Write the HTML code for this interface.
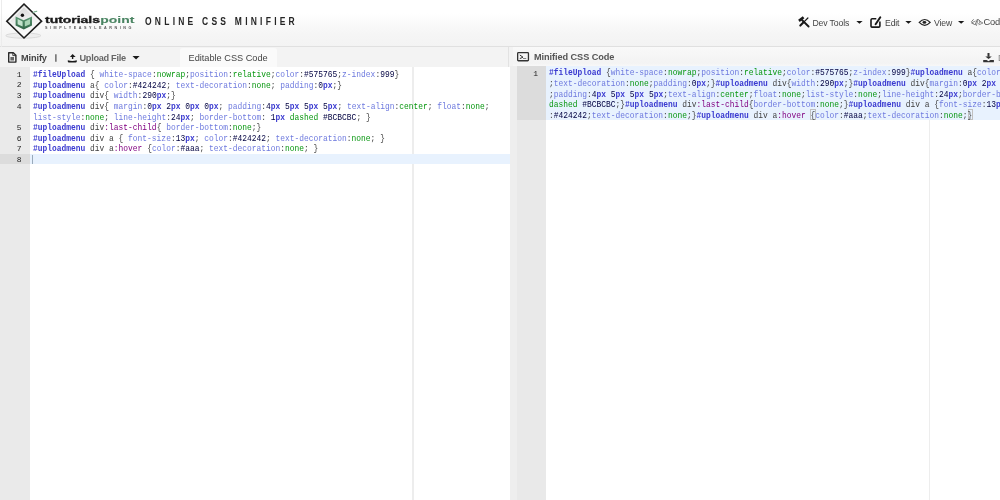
<!DOCTYPE html>
<html><head><meta charset="utf-8">
<style>
*{margin:0;padding:0;box-sizing:border-box}
html,body{width:1000px;height:500px;overflow:hidden;background:#fff;font-family:"Liberation Sans",sans-serif}
.abs{position:absolute}
svg{filter:blur(0.25px)}
#hdr{position:absolute;left:0;top:0;width:1000px;height:47px;background:linear-gradient(#ffffff 0%,#ffffff 28%,#f5f5f5 75%,#f3f3f3 100%);border-bottom:1px solid #e0e0e0}
#title{filter:blur(0.25px);position:absolute;left:145px;top:17.1px;font-size:10px;line-height:10px;font-weight:bold;letter-spacing:3.8px;color:#252525;white-space:nowrap;transform:scaleX(0.85);transform-origin:0 0}
.menu{filter:blur(0.25px);position:absolute;top:17.7px;font-size:8.7px;line-height:10px;letter-spacing:-0.15px;color:#444;white-space:nowrap}
#tb{position:absolute;left:0;top:47px;width:1000px;height:19.5px;background:#f3f3f3}
.tbt{filter:blur(0.25px);position:absolute;top:52.55px;font-size:9.2px;line-height:10px;color:#444;white-space:nowrap}
#tab{position:absolute;left:180px;top:48px;width:97px;height:19px;background:#fafafa;border-radius:3px 3px 0 0}
#ed{position:absolute;left:0;top:66.5px;width:1000px;height:434px;background:#fff}
.gut{position:absolute;top:66.3px;height:434px;background:#eaeaea}
.code{position:absolute;top:69.9px;font-family:"Liberation Mono",monospace;font-size:9.2px;line-height:10.667px;color:rgb(64,64,64);white-space:pre;transform:scaleX(0.8623);transform-origin:0 0;filter:blur(0.3px)}
.gnums{filter:blur(0.25px);position:absolute;top:68.5px;font-family:"Liberation Mono",monospace;font-size:8px;line-height:10.667px;color:#222;text-align:right}
.ln{height:10.667px}
.gn{height:10.667px}
i{font-style:normal}
.k{color:#3a3ad0;font-weight:bold}
.p{color:rgb(109,121,222)}
.c{color:rgb(6,150,14)}
.n{color:rgb(0,0,64)}
.s{color:rgb(128,0,128)}
</style></head><body>
<div id="hdr"></div>
<!-- logo -->
<svg class="abs" style="left:0;top:0" width="140" height="45" viewBox="0 0 140 45">
 <defs>
  <radialGradient id="sh" cx="50%" cy="50%" r="50%"><stop offset="0" stop-color="#c8c8c8"/><stop offset="0.7" stop-color="#dcdcdc"/><stop offset="1" stop-color="#f2f2f2" stop-opacity="0"/></radialGradient>
  <linearGradient id="dg" x1="0" y1="0" x2="0.3" y2="1"><stop offset="0" stop-color="#cfcfcf"/><stop offset="0.55" stop-color="#ececec"/><stop offset="1" stop-color="#fdfdfd"/></linearGradient>
  <linearGradient id="bk" x1="0" y1="0" x2="0" y2="1"><stop offset="0" stop-color="#5e9a76"/><stop offset="1" stop-color="#2f6446"/></linearGradient>
 </defs>
 <ellipse cx="23.3" cy="35.6" rx="17.6" ry="2.6" fill="#eeeeee" stroke="#dadada" stroke-width="1"/>
 <path d="M24 4 L41.6 21.2 L24 38 L6.8 21.2 Z" fill="url(#dg)" stroke="#1c1c1c" stroke-width="1.6" stroke-linejoin="miter"/>
 <path d="M24 6.6 L38.9 21.2 L24 35.4 L9.5 21.2 Z" fill="none" stroke="#fafafa" stroke-width="1"/>
 <path d="M15.6 16.4 L23.6 20.2 L32 16.4 L32 25.6 L23.8 29.6 L15.6 25.6 Z" fill="url(#bk)"/>
 <path d="M17.6 19 L22.6 21.6 L22.6 26.4 L17.6 24.2Z" fill="#c4e3cd"/>
 <path d="M24.8 21.6 L30 19 L30 24.2 L24.8 26.4Z" fill="#a9d4b6"/>
 <circle cx="22.4" cy="15.2" r="1.7" fill="#111"/>
 <path d="M32.8 13 Q34.5 11.2 37.2 11.4" stroke="#7fb394" stroke-width="1.1" fill="none"/>
 <text x="45" y="23.4" font-family="Liberation Sans" font-weight="bold" font-size="9.2" fill="#1a1a1a" stroke="#1a1a1a" stroke-width="0.35" textLength="55" lengthAdjust="spacingAndGlyphs">tutorials</text>
 <text x="100.3" y="23.4" font-family="Liberation Sans" font-weight="bold" font-size="9.2" fill="#4a8462" stroke="#4a8462" stroke-width="0.1" textLength="34" lengthAdjust="spacingAndGlyphs">point</text>
 <text x="45" y="28.8" font-family="Liberation Sans" font-weight="bold" font-size="3.2" fill="#555" letter-spacing="2.2" textLength="89" lengthAdjust="spacingAndGlyphs">SIMPLYEASYLEARNING</text>
</svg>
<div class="abs" style="left:0.5px;top:0;width:1px;height:67px;background:#ececec"></div>
<div id="title">ONLINE CSS MINIFIER</div>

<!-- right menu -->

<div class="menu" style="left:812.5px">Dev Tools</div>


<div class="menu" style="left:885px">Edit</div>


<div class="menu" style="left:934px">View</div>

<div class="menu" style="left:971px;color:#777">&lt;/&gt;</div>
<div class="menu" style="left:983.5px;color:#444;font-size:9.3px;top:16.8px">Code</div>

<!-- toolbar -->
<div id="tb"></div>
<div class="abs" style="left:508px;top:47px;width:1px;height:20px;background:#e2e2e2"></div>
<div class="abs" style="left:513px;top:47px;width:487px;height:19.3px;background:linear-gradient(#f9f9f9,#f3f3f3 85%,#f8f8f8)"></div>
<div id="tab"></div>

<div class="tbt" style="left:21px;font-weight:bold;letter-spacing:-0.12px">Minify</div>


<div class="tbt" style="left:79.5px;font-weight:bold;letter-spacing:-0.3px;color:#666">Upload File</div>

<div class="tbt" style="left:188.5px;top:53.35px">Editable CSS Code</div>


<div class="tbt" style="left:534px;top:51.65px;font-weight:bold;letter-spacing:-0.08px;color:#555">Minified CSS Code</div>

<div class="tbt" style="left:998px;color:#888">D</div>

<!-- editors -->
<div class="abs" style="left:412.2px;top:67px;width:1.5px;height:434px;background:#ededed"></div>
<div class="abs" style="left:928.8px;top:66.3px;width:1.5px;height:434px;background:#ededed"></div>
<div class="gut" style="left:0;width:29.5px;top:67px"></div>
<div class="abs" style="left:0;top:153.5px;width:29.5px;height:10.667px;background:#dcdcdc"></div>
<div class="abs" style="left:29.5px;top:153.5px;width:480.5px;height:10.667px;background:rgb(232,242,254)"></div>
<div class="gnums" style="left:0;width:21.5px;top:69.8px"><div class="gn">1</div><div class="gn">2</div><div class="gn">3</div><div class="gn">4</div><div class="gn"></div><div class="gn">5</div><div class="gn">6</div><div class="gn">7</div><div class="gn">8</div></div>
<div class="code" style="left:32.5px"><div class="ln"><i class="k">#fileUpload</i> { <i class="p">white-space</i>:<i class="c">nowrap</i>;<i class="p">position</i>:<i class="c">relative</i>;<i class="p">color</i>:<i class="n">#575765</i>;<i class="p">z-index</i>:<i class="n">999</i>}</div><div class="ln"><i class="k">#uploadmenu</i> a{ <i class="p">color</i>:<i class="n">#424242</i>; <i class="p">text-decoration</i>:<i class="c">none</i>; <i class="p">padding</i>:<i class="n">0</i><i class="k">px</i>;}</div><div class="ln"><i class="k">#uploadmenu</i> div{ <i class="p">width</i>:<i class="n">290</i><i class="k">px</i>;}</div><div class="ln"><i class="k">#uploadmenu</i> div{ <i class="p">margin</i>:<i class="n">0</i><i class="k">px</i> <i class="n">2</i><i class="k">px</i> <i class="n">0</i><i class="k">px</i> <i class="n">0</i><i class="k">px</i>; <i class="p">padding</i>:<i class="n">4</i><i class="k">px</i> <i class="n">5</i><i class="k">px</i> <i class="n">5</i><i class="k">px</i> <i class="n">5</i><i class="k">px</i>; <i class="p">text-align</i>:<i class="c">center</i>; <i class="p">float</i>:<i class="c">none</i>;</div><div class="ln"><i class="p">list-style</i>:<i class="c">none</i>; <i class="p">line-height</i>:<i class="n">24</i><i class="k">px</i>; <i class="p">border-bottom</i>: <i class="n">1</i><i class="k">px</i> <i class="c">dashed</i> <i class="n">#BCBCBC</i>; }</div><div class="ln"><i class="k">#uploadmenu</i> div<i class="s">:last-child</i>{ <i class="p">border-bottom</i>:<i class="c">none</i>;}</div><div class="ln"><i class="k">#uploadmenu</i> div a { <i class="p">font-size</i>:<i class="n">13</i><i class="k">px</i>; <i class="p">color</i>:<i class="n">#424242</i>; <i class="p">text-decoration</i>:<i class="c">none</i>; }</div><div class="ln"><i class="k">#uploadmenu</i> div a<i class="s">:hover</i> {<i class="p">color</i>:<i class="n">#aaa</i>; <i class="p">text-decoration</i>:<i class="c">none</i>; }</div><div class="ln">&#8203;</div></div>
<div class="abs" style="left:32.3px;top:154.5px;width:1px;height:9px;background:#9ab"></div>

<div class="gut" style="left:510px;width:36px;background:#eeeeee"></div>
<div class="gut" style="left:517px;width:28.7px;background:#e9e9e9"></div>
<div class="abs" style="left:517px;top:66.3px;width:29px;height:53.3px;background:#dcdcdc"></div>
<div class="abs" style="left:546px;top:66.3px;width:454px;height:53.3px;background:rgb(232,242,254)"></div>
<div class="abs" style="left:810.4px;top:109px;width:5.4px;height:11px;border:0.8px solid rgb(192,192,192)"></div>
<div class="abs" style="left:967.6px;top:109px;width:5.4px;height:11px;border:0.8px solid rgb(192,192,192)"></div>
<div class="gnums" style="left:510px;width:28px;top:68.5px">1</div>
<div class="code" style="left:549.2px;top:68.3px"><div class="ln"><i class="k">#fileUpload</i> {<i class="p">white-space</i>:<i class="c">nowrap</i>;<i class="p">position</i>:<i class="c">relative</i>;<i class="p">color</i>:<i class="n">#575765</i>;<i class="p">z-index</i>:<i class="n">999</i>}<i class="k">#uploadmenu</i> a{<i class="p">color</i>:<i class="n">#424242</i></div><div class="ln">;<i class="p">text-decoration</i>:<i class="c">none</i>;<i class="p">padding</i>:<i class="n">0</i><i class="k">px</i>;}<i class="k">#uploadmenu</i> div{<i class="p">width</i>:<i class="n">290</i><i class="k">px</i>;}<i class="k">#uploadmenu</i> div{<i class="p">margin</i>:<i class="n">0</i><i class="k">px</i> <i class="n">2</i><i class="k">px</i> <i class="n">0</i><i class="k">px</i> <i class="n">0</i><i class="k">px</i></div><div class="ln">;<i class="p">padding</i>:<i class="n">4</i><i class="k">px</i> <i class="n">5</i><i class="k">px</i> <i class="n">5</i><i class="k">px</i> <i class="n">5</i><i class="k">px</i>;<i class="p">text-align</i>:<i class="c">center</i>;<i class="p">float</i>:<i class="c">none</i>;<i class="p">list-style</i>:<i class="c">none</i>;<i class="p">line-height</i>:<i class="n">24</i><i class="k">px</i>;<i class="p">border-bottom</i>:<i class="n">1</i><i class="k">px</i></div><div class="ln"><i class="c">dashed</i> <i class="n">#BCBCBC</i>;}<i class="k">#uploadmenu</i> div<i class="s">:last-child</i>{<i class="p">border-bottom</i>:<i class="c">none</i>;}<i class="k">#uploadmenu</i> div a {<i class="p">font-size</i>:<i class="n">13</i><i class="k">px</i>;<i class="p">color</i></div><div class="ln">:<i class="n">#424242</i>;<i class="p">text-decoration</i>:<i class="c">none</i>;}<i class="k">#uploadmenu</i> div a<i class="s">:hover</i> {<i class="p">color</i>:<i class="n">#aaa</i>;<i class="p">text-decoration</i>:<i class="c">none</i>;}</div></div>
<svg class="abs" style="left:0;top:0" width="1000" height="500" viewBox="0 0 1000 500">
 <!-- tools -->
 <path d="M798.9 20.9L803.6 17.3" stroke="#1a1a1a" stroke-width="2.6" stroke-linecap="butt"/>
 <path d="M802 20L808.6 26.5" stroke="#1a1a1a" stroke-width="1.9" stroke-linecap="round"/>
 <path d="M807.9 18L803.5 22.4" stroke="#1a1a1a" stroke-width="1.2" stroke-linecap="round"/>
 <path d="M803.8 22.1L800.3 25.6" stroke="#1a1a1a" stroke-width="2.1" stroke-linecap="round"/>
 <path d="M856.3 21.1H862.6L859.45 23.8Z" fill="#1a1a1a"/>
 <!-- edit -->
 <path d="M876.3 18.8H872A1.2 1.2 0 0 0 871 20V26.1A1.2 1.2 0 0 0 872 27.1H878.8A1.2 1.2 0 0 0 879.9 26.1V21.4" stroke="#1a1a1a" stroke-width="1.6" fill="none"/>
 <path d="M880.3 17.3L875.6 24.2" stroke="#1a1a1a" stroke-width="2" stroke-linecap="round"/>
 <path d="M905.3 21.1H911.6L908.45 23.8Z" fill="#1a1a1a"/>
 <!-- eye -->
 <path d="M919.2 22.4Q924.7 16.6 930.2 22.4Q924.7 28.2 919.2 22.4Z" stroke="#222" stroke-width="1.2" fill="none"/>
 <ellipse cx="924.4" cy="22.4" rx="1.9" ry="1.3" fill="#222"/>
 <path d="M958 21.1H964.3L961.15 23.8Z" fill="#1a1a1a"/>
 <!-- code icon -->
 <path d="M973.6 19.3L971.5 21.7L973.6 24.1M977.5 19L975 25M978.4 19.3L980.5 21.7L978.4 24.1" stroke="#777" stroke-width="1" fill="none"/>
 <!-- minify file -->
 <path d="M8.7 52.7H13.3L15.9 55.3V62.1H8.7Z" stroke="#2a2a2a" stroke-width="1.4" fill="none" stroke-linejoin="round"/><path d="M12.8 52.8V55.6H15.8" stroke="#2a2a2a" stroke-width="0.9" fill="none"/>
 <rect x="10.4" y="57" width="3.6" height="3.5" fill="#666"/>
 <!-- pipe -->
 <path d="M55.9 54.2V61.8" stroke="#3a3a3a" stroke-width="1.1"/>
 <!-- upload -->
 <path d="M69.9 56.9L72.6 54.1L75.6 56.9Z" fill="#1a1a1a"/>
 <path d="M72.6 56.5V59" stroke="#1a1a1a" stroke-width="1.4"/>
 <path d="M67.8 60.2Q72.3 61.6 76.8 60.2V61.4Q76.8 62.4 75.6 62.4H69Q67.8 62.4 67.8 61.4Z" fill="#1a1a1a"/>
 <path d="M132.5 56H139.6L136.05 59.4Z" fill="#1a1a1a"/>
 <!-- terminal -->
 <rect x="517.65" y="52.65" width="10.8" height="8.1" stroke="#333" stroke-width="1.3" fill="none" rx="0.8"/>
 <path d="M519.8 55L523 57.2L519.8 58.6" stroke="#333" stroke-width="1" fill="none"/>
 <path d="M523 58.5H526.2" stroke="#666" stroke-width="0.8"/>
 <!-- download -->
 <path d="M988.5 53V56.8" stroke="#333" stroke-width="2"/>
 <path d="M985.3 56.4H991.8L988.55 58.9Z" fill="#333"/>
 <path d="M983.2 60H986.6L988.5 61.2L990.4 60H993.9V62.3H983.2Z" fill="#333"/>
</svg>
</body></html>
